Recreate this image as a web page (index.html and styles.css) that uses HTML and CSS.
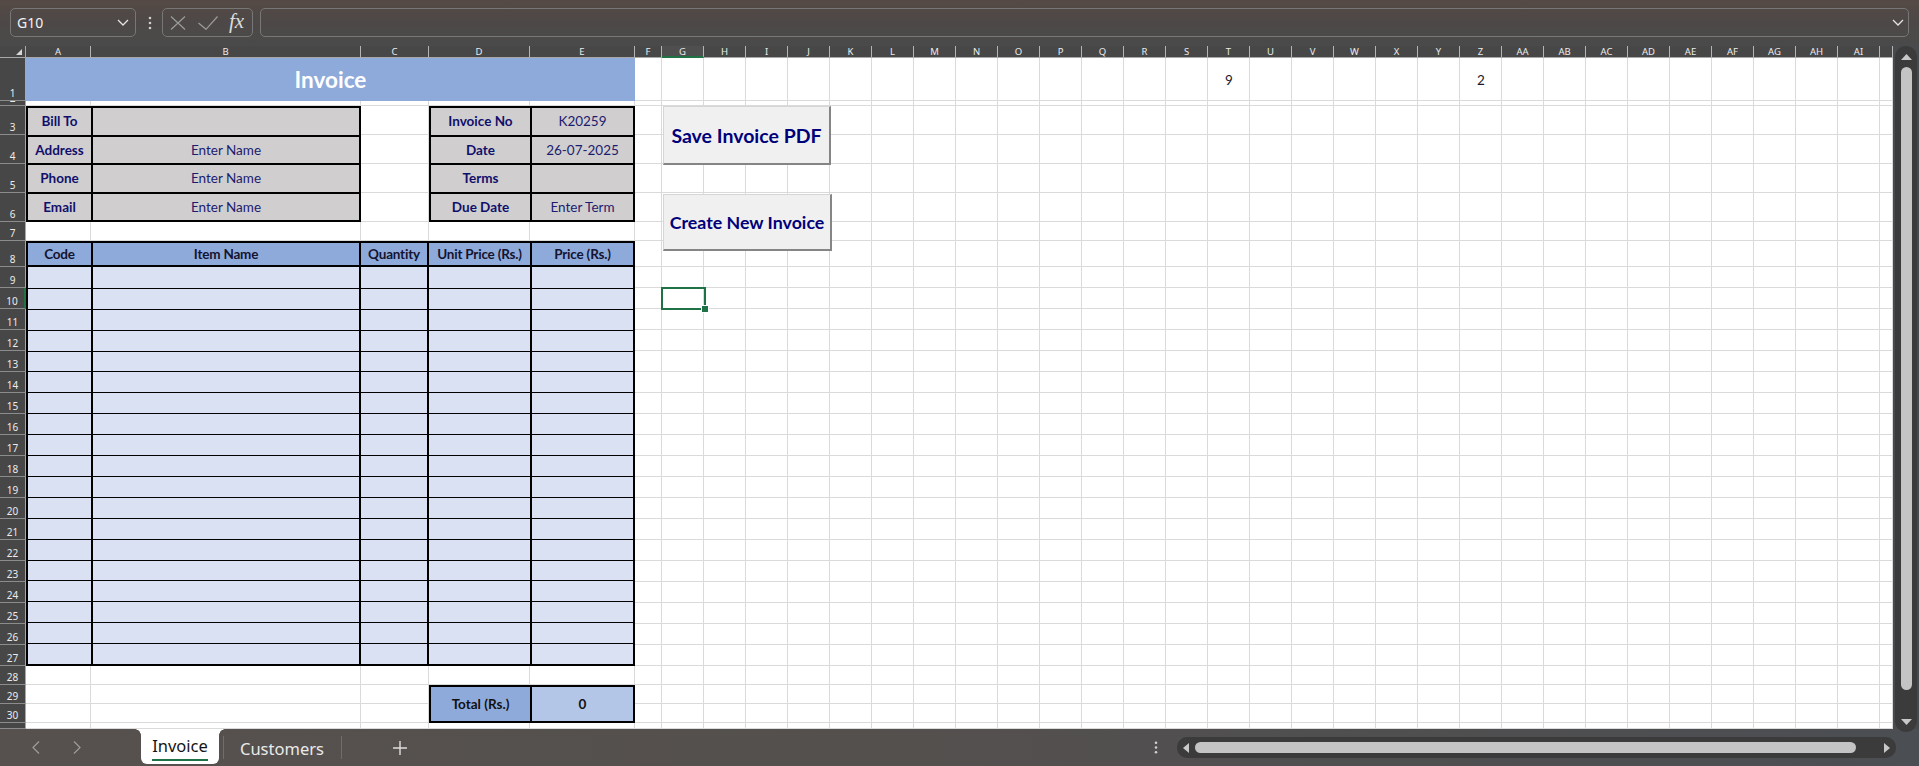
FILE: index.html
```html
<!DOCTYPE html>
<html lang="en">
<head>
<meta charset="utf-8">
<title>Invoice</title>
<link rel="stylesheet" href="styles.css">
</head>
<body>
<div class="app">
  <header class="fbar">
    <div class="namebox">
      <span class="nb-text">G10</span>
      <svg class="chev" width="12" height="7" viewBox="0 0 12 7"><polyline points="1,1 6,6 11,1" fill="none" stroke="#e4e4e4" stroke-width="1.3"/></svg>
    </div>
    <svg class="fdots" width="4" height="14" viewBox="0 0 4 14"><circle cx="2" cy="2" r="1.3" fill="#cfcfcf"/><circle cx="2" cy="7" r="1.3" fill="#cfcfcf"/><circle cx="2" cy="12" r="1.3" fill="#cfcfcf"/></svg>
    <div class="fbtns">
      <svg class="ico-x" width="16" height="14" viewBox="0 0 16 14"><path d="M1 0.5 L15 13.5 M15 0.5 L1 13.5" stroke="#9c9c9c" stroke-width="1.2" fill="none"/></svg>
      <svg class="ico-ok" width="20" height="14" viewBox="0 0 20 14"><polyline points="0.5,7 8,13.3 19.5,0.5" stroke="#9c9c9c" stroke-width="1.2" fill="none"/></svg>
      <span class="fx">fx</span>
    </div>
    <div class="finput">
      <svg class="chev" width="12" height="7" viewBox="0 0 12 7"><polyline points="1,1 6,6 11,1" fill="none" stroke="#e4e4e4" stroke-width="1.3"/></svg>
    </div>
  </header>

  <div class="main">
    <div class="sheet">
      <div class="cells" id="cells"></div>
      <div class="content">
        <div class="title">Invoice</div>
        <div class="num n9">9</div>
        <div class="num n2">2</div>

        <div class="box bill">
          <div class="lbl">Bill To</div><div class="val"></div>
          <div class="lbl">Address</div><div class="val">Enter Name</div>
          <div class="lbl">Phone</div><div class="val">Enter Name</div>
          <div class="lbl">Email</div><div class="val">Enter Name</div>
        </div>

        <div class="box inv">
          <div class="lbl">Invoice No</div><div class="val">K20259</div>
          <div class="lbl">Date</div><div class="val">26-07-2025</div>
          <div class="lbl">Terms</div><div class="val"></div>
          <div class="lbl">Due Date</div><div class="val">Enter Term</div>
        </div>

        <div class="items" id="items">
          <div class="ih">Code</div>
          <div class="ih">Item Name</div>
          <div class="ih">Quantity</div>
          <div class="ih">Unit Price (Rs.)</div>
          <div class="ih">Price (Rs.)</div>
        </div>

        <div class="box total">
          <div class="tl">Total (Rs.)</div><div class="tv">0</div>
        </div>
      </div>

      <button class="btn btn-save">Save Invoice PDF</button>
      <button class="btn btn-new">Create New Invoice</button>
      <div class="sel"></div>
    </div>

    <div class="vscroll">
      <div class="vtrack">
        <svg class="varr" width="11" height="6" viewBox="0 0 11 6"><polygon points="5.5,0 11,6 0,6" fill="#c8c8c8"/></svg>
        <div class="vthumb"></div>
        <svg class="varr down" width="11" height="6" viewBox="0 0 11 6"><polygon points="0,0 11,0 5.5,6" fill="#c8c8c8"/></svg>
      </div>
    </div>
  </div>

  <footer class="tabbar">
    <div class="tabnav">
      <svg width="8" height="13" viewBox="0 0 8 13"><polyline points="7,0.5 1,6.5 7,12.5" fill="none" stroke="#9d9d9d" stroke-width="1.2"/></svg>
      <svg width="8" height="13" viewBox="0 0 8 13"><polyline points="1,0.5 7,6.5 1,12.5" fill="none" stroke="#9d9d9d" stroke-width="1.2"/></svg>
    </div>
    <div class="tab active"><span class="tab-text">Invoice</span><span class="uline"></span></div>
    <div class="tsep"></div>
    <div class="tab2">Customers</div>
    <div class="tsep s2"></div>
    <svg class="plus" width="14" height="14" viewBox="0 0 14 14"><path d="M7 0 V14 M0 7 H14" stroke="#dedede" stroke-width="1.4"/></svg>

    <div class="hzone">
      <svg class="hdots" width="4" height="13" viewBox="0 0 4 13"><circle cx="2" cy="1.8" r="1.3" fill="#d0d0d0"/><circle cx="2" cy="6.5" r="1.3" fill="#d0d0d0"/><circle cx="2" cy="11.2" r="1.3" fill="#d0d0d0"/></svg>
      <div class="htrack">
        <svg width="6" height="10" viewBox="0 0 6 10"><polygon points="6,0 6,10 0,5" fill="#c8c8c8"/></svg>
        <div class="hthumb"></div>
        <svg width="6" height="10" viewBox="0 0 6 10"><polygon points="0,0 6,5 0,10" fill="#c8c8c8"/></svg>
      </div>
    </div>
  </footer>
</div>
<script src="script.js"></script>
</body>
</html>
```

FILE: styles.css
```css
* { box-sizing: border-box; margin: 0; padding: 0; }

html, body {
  width: 1919px;
  height: 766px;
  overflow: hidden;
  background: #4a4a4a;
}

body { font-family: "Noto Sans", "Open Sans", sans-serif; }

.app {
  width: 1919px;
  height: 766px;
  display: flex;
  flex-direction: column;
}

/* ---------- formula bar ---------- */
.fbar {
  height: 46px;
  flex: none;
  display: flex;
  align-items: flex-start;
  padding: 8px 10px 0 10px;
  background: linear-gradient(180deg, #554a45 0%, #4e4847 40%, #4a4a4a 100%);
}

.namebox {
  width: 126px;
  height: 29px;
  border: 1px solid #777;
  border-radius: 5px;
  display: flex;
  align-items: center;
  justify-content: space-between;
  padding: 0 6px;
  color: #f2f2f2;
  font-size: 14px;
}

.nb-text { line-height: 20px; }

.fdots { margin: 8px 0 0 12px; }

.fbtns {
  width: 91px;
  height: 29px;
  margin-left: 10px;
  border: 1px solid #777;
  border-radius: 5px;
  display: flex;
  align-items: center;
  padding-left: 7px;
}

.ico-ok { margin-left: 12px; }

.fx {
  margin-left: 11px;
  font-family: "Liberation Serif", "DejaVu Serif", serif;
  font-style: italic;
  font-size: 21px;
  line-height: 20px;
  color: #dcdcdc;
  margin-top: -3px;
}

.finput {
  flex: 1;
  height: 29px;
  margin-left: 7px;
  border: 1px solid #777;
  border-radius: 5px;
  display: flex;
  align-items: center;
  justify-content: flex-end;
  padding-right: 4px;
}

/* ---------- sheet ---------- */
.main {
  height: 683px;
  flex: none;
  display: flex;
}

.sheet {
  --cols: 26px 65px 270px 68px 101px 105px 27px repeat(29, 42px) 13px;
  --rows: 12px 43px 5px repeat(4, 29px) 19px 26px repeat(19, 21px) 19px 19px 19px 6px;
  width: 1893px;
  height: 683px;
  position: relative;
  display: grid;
  background: #fff;
  overflow: hidden;
}

.cells, .content {
  grid-area: 1 / 1;
  display: grid;
  grid-template-columns: var(--cols);
  grid-template-rows: var(--rows);
}

.c {
  border-right: 1px solid #dadada;
  border-bottom: 1px solid #dadada;
}

.corner {
  background: #474747;
  border-right: 1px solid #a8a8a8;
  border-bottom: 1px solid #a8a8a8;
  position: relative;
}
.corner::after {
  content: "";
  position: absolute;
  right: 3px;
  bottom: 2px;
  width: 0;
  height: 0;
  border-left: 6px solid transparent;
  border-bottom: 6px solid #d8d8d8;
}

.ch {
  background: #474747;
  border-right: 1px solid #b4b4b4;
  border-bottom: 1px solid #a8a8a8;
  color: #ececec;
  font-size: 9.5px;
  line-height: 11px;
  text-align: center;
  white-space: nowrap;
}
.ch.on {
  background: #4f4f4f;
  border-bottom: 2px solid #217346;
}

.rh {
  background: #474747;
  border-right: 1px solid #a8a8a8;
  border-bottom: 1px solid #8c8c8c;
  color: #ececec;
  font-size: 10px;
  line-height: 11px;
  display: flex;
  align-items: flex-end;
  justify-content: center;
  overflow: hidden;
  padding-bottom: 1px;
}
.rh.on { border-right: 2px solid #217346; }

/* ---------- content ---------- */
.title {
  grid-row: 2;
  grid-column: 2 / 7;
  background: #8eaadb;
  color: #fff;
  font: 700 22.5px "Lato", sans-serif;
  display: flex;
  align-items: center;
  justify-content: center;
}

.num {
  grid-row: 2;
  display: flex;
  align-items: center;
  justify-content: center;
  font: 400 13.5px "Lato", sans-serif;
  color: #1a1a2a;
}
.n9 { grid-column: 21; }
.n2 { grid-column: 27; }

.box {
  display: grid;
  gap: 2px;
  background: #000;
  border: 2px solid #000;
}

.bill {
  grid-row: 4 / 8;
  grid-column: 2 / 4;
  grid-template-columns: 63px 1fr;
  grid-template-rows: repeat(4, 1fr);
}

.inv {
  grid-row: 4 / 8;
  grid-column: 5 / 7;
  grid-template-columns: 99px 1fr;
  grid-template-rows: repeat(4, 1fr);
}

.lbl, .val {
  background: #d0cece;
  display: flex;
  align-items: center;
  justify-content: center;
  color: #10106c;
  font-family: "Lato", sans-serif;
  font-size: 13.5px;
  white-space: nowrap;
}
.lbl { font-weight: 700; }
.val { font-weight: 400; color: #1c1c70; }

.items {
  grid-row: 9 / 29;
  grid-column: 2 / 7;
  display: grid;
  grid-template-columns: 63px 266px 66px 101px 1fr;
  grid-template-rows: 24px repeat(19, 1fr);
  column-gap: 2px;
  background: #000;
  border: 2px solid #000;
}

.ih {
  background: #8eaadb;
  border-bottom: 2px solid #000;
  display: flex;
  align-items: center;
  justify-content: center;
  font: 700 13.5px "Lato", sans-serif;
  color: #141430;
  white-space: nowrap;
  letter-spacing: -0.2px;
}

.ib {
  background: #d9e1f2;
  border-top: 1px solid #000;
}
.ib.first { border-top: 0; }

.total {
  grid-row: 30 / 32;
  grid-column: 5 / 7;
  grid-template-columns: 99px 1fr;
}

.tl, .tv {
  display: flex;
  align-items: center;
  justify-content: center;
  font: 700 13.5px "Lato", sans-serif;
  color: #111;
}
.tl { background: #8eaadb; }
.tv { background: #b4c6e7; }

/* ---------- floating shapes ---------- */
.btn {
  position: absolute;
  z-index: 2;
  left: 663px;
  width: 168px;
  background: #f0f0f0;
  border-top: 1px solid #d6d6d6;
  border-left: 1px solid #d6d6d6;
  border-right: 2px solid #858585;
  border-bottom: 2px solid #858585;
  font-family: "Lato", sans-serif;
  font-weight: 700;
  color: #00007a;
  white-space: nowrap;
  cursor: pointer;
}
.btn-save { top: 60px; height: 59px; font-size: 19.5px; }
.btn-new { top: 148px; height: 57px; width: 169px; font-size: 17.8px; }

.sel {
  position: absolute;
  z-index: 2;
  left: 661px;
  top: 241px;
  width: 45px;
  height: 23px;
  border: 2px solid #1f7246;
}
.sel::after {
  content: "";
  position: absolute;
  right: -4px;
  bottom: -4px;
  width: 6px;
  height: 6px;
  background: #1f7246;
  outline: 1px solid #fff;
}

/* ---------- vertical scrollbar ---------- */
.vscroll {
  width: 26px;
  height: 683px;
  background: #484b4e;
  padding-left: 2px;
  position: relative;
}

.vtrack {
  width: 22px;
  height: 686px;
  background: #3b3b3b;
  border-radius: 11px;
  display: flex;
  flex-direction: column;
  align-items: center;
  padding-top: 8px;
  position: relative;
  z-index: 1;
}

.vthumb {
  width: 11px;
  height: 623px;
  margin-top: 7px;
  background: #c4c4c4;
  border-radius: 6px;
}

.varr.down { margin-top: 29px; }

/* ---------- sheet tabs ---------- */
.tabbar {
  height: 37px;
  flex: none;
  display: flex;
  align-items: center;
  background: linear-gradient(90deg, #56514f 0%, #54504e 45%, #4b4e52 100%);
  color: #eaeaea;
  font-size: 16.5px;
}

.tabnav {
  width: 141px;
  height: 37px;
  display: flex;
  align-items: center;
  padding-left: 32px;
  gap: 33px;
}

.tab {
  width: 78px;
  height: 35px;
  align-self: flex-start;
  background: #fff;
  border-radius: 0 0 6px 6px;
  position: relative;
  display: flex;
  flex-direction: column;
  align-items: center;
  padding-top: 6px;
  color: #141414;
}
.tab::before, .tab::after {
  content: "";
  position: absolute;
  top: 0;
  width: 6px;
  height: 6px;
}
.tab::before {
  left: -6px;
  background: radial-gradient(circle at 0 100%, transparent 5.5px, #fff 6px);
}
.tab::after {
  right: -6px;
  background: radial-gradient(circle at 100% 100%, transparent 5.5px, #fff 6px);
}

.tab-text { line-height: 22px; }

.uline {
  width: 56px;
  height: 2px;
  margin-top: 2px;
  background: #1e7145;
}

.tsep {
  width: 1px;
  height: 23px;
  margin-left: 4px;
  background: #726d6a;
}
.tsep.s2 { margin-left: 17px; }

.tab2 {
  margin-left: 16px;
  line-height: 22px;
  padding-top: 2px;
}

.plus { margin-left: 51px; }

.hzone {
  margin-left: auto;
  display: flex;
  align-items: center;
  margin-right: 23px;
}

.hdots { margin-right: 19px; }

.htrack {
  width: 719px;
  height: 21px;
  background: #3b3b3b;
  border-radius: 10px;
  display: flex;
  align-items: center;
  padding: 0 6px 0 6px;
  gap: 6px;
}

.hthumb {
  flex: 1;
  height: 11px;
  margin-right: 22px;
  background: #c4c4c4;
  border-radius: 6px;
}
```

FILE: script.js
```js
(function () {
  var cells = document.getElementById('cells');
  var ROWS = 32, COLS = 37;

  function colName(n) {
    var s = '';
    while (n > 0) {
      var m = (n - 1) % 26;
      s = String.fromCharCode(65 + m) + s;
      n = Math.floor((n - 1) / 26);
    }
    return s;
  }

  var frag = document.createDocumentFragment();
  for (var r = 0; r < ROWS; r++) {
    for (var c = 0; c < COLS; c++) {
      var d = document.createElement('div');
      if (r === 0 && c === 0) {
        d.className = 'corner';
      } else if (r === 0) {
        d.className = 'ch' + (c === 7 ? ' on' : '');
        if (c < COLS - 1) d.textContent = colName(c);
      } else if (c === 0) {
        d.className = 'rh' + (r === 10 ? ' on' : '');
        if (r < ROWS - 1) {
          var s = document.createElement('span');
          s.textContent = String(r);
          d.appendChild(s);
        }
      } else {
        d.className = 'c';
      }
      frag.appendChild(d);
    }
  }
  cells.appendChild(frag);

  var items = document.getElementById('items');
  var f2 = document.createDocumentFragment();
  for (var i = 0; i < 19; i++) {
    for (var j = 0; j < 5; j++) {
      var b = document.createElement('div');
      b.className = 'ib' + (i === 0 ? ' first' : '');
      f2.appendChild(b);
    }
  }
  items.appendChild(f2);
})();
```
